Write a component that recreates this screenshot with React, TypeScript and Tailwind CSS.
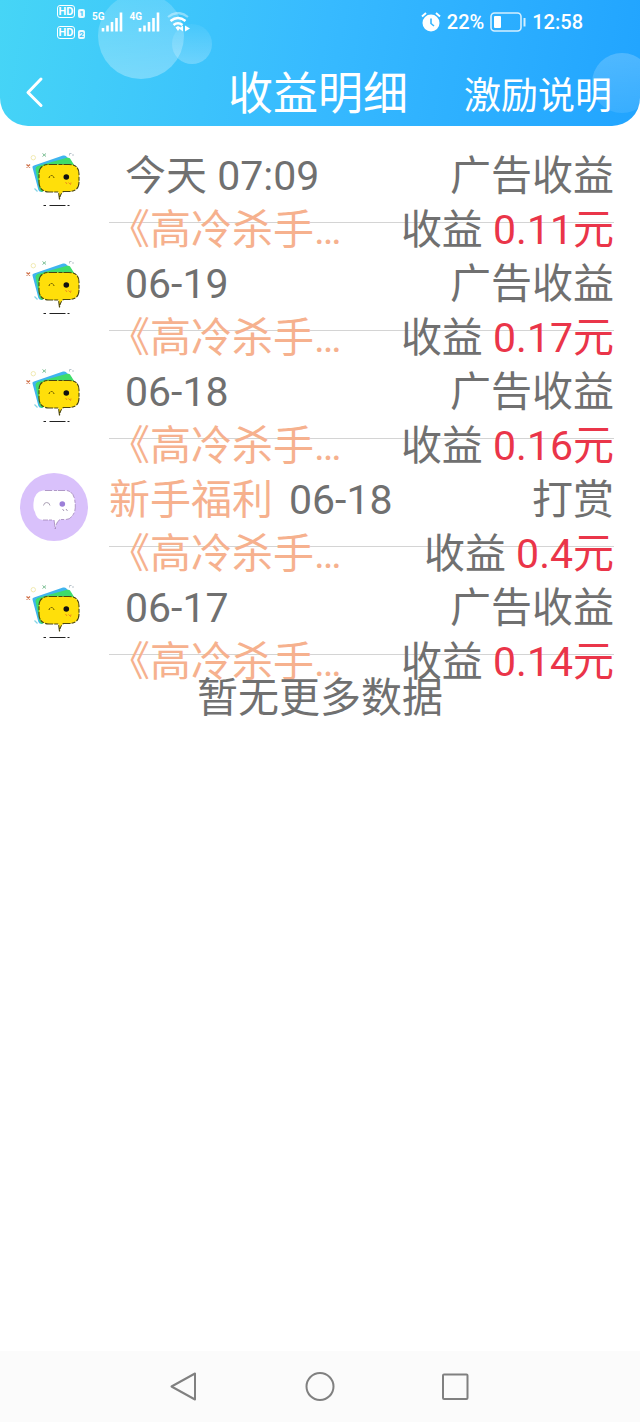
type Income = {
    id: number;
    badge?: string;
    date: string;
    kind: string;
    book: string;
    amount: string;
    reward?: boolean;
}

const incomes: Income[] = [
    { id: 1, date: "今天 07:09", kind: "广告收益", book: "《高冷杀手…", amount: "0.11元" },
    { id: 2, date: "06-19", kind: "广告收益", book: "《高冷杀手…", amount: "0.17元" },
    { id: 3, date: "06-18", kind: "广告收益", book: "《高冷杀手…", amount: "0.16元" },
    { id: 4, badge: "新手福利", date: "06-18", kind: "打赏", book: "《高冷杀手…", amount: "0.4元", reward: true },
    { id: 5, date: "06-17", kind: "广告收益", book: "《高冷杀手…", amount: "0.14元" },
];

function AdAvatar() {
    return (
        <svg viewBox="0 0 68 68" className="size-[68px] shrink-0" fill="none">
            <path d="M12.5 18.5Q12 17 14 16.4L43 6.6Q45 6 46.4 7.4L52 13L22 43Q19 43 18.4 41Z" fill="#3fb4ee" />
            <path d="M15.5 20Q15.5 18 17.5 17L47 8.8Q50 8 51 11L56 19L22 43Q20 42 19.4 40Z" fill="#3fdc6a" />
            <path d="M29 15.5H49Q59 15.5 59 25V33Q59 42.5 49 42.5H43.5Q40 45 39.5 50.5L38.5 43H29Q19 42.5 19 33V25Q19 15.5 29 15.5Z" fill="#ffdf0a" />
            <path d="M29 15.5H49Q59 15.5 59 25V33Q59 42.5 49 42.5H43.5Q40 45 39.5 50.5L38.5 43H29Q19 42.5 19 33V25Q19 15.5 29 15.5Z" stroke="#4a4510" strokeWidth="1.1" strokeDasharray="8 1.5 4 1" />
            <path d="M29 29Q29.5 26.5 31.5 26.5T34 29" stroke="#5c4d00" strokeDasharray="2 1" />
            <circle cx="46.3" cy="28" r="2.8" fill="#111" />
            <path d="M45.5 33L47 35M48.5 33.5L50.5 35.5L51 33.5" stroke="#f08a1c" />
            <path d="M6.5 15.5L10 18.5M10 15.5L6.5 18.5" stroke="#d0714a" strokeWidth="1.3" />
            <circle cx="13.3" cy="8.7" r="2.2" stroke="#f1eab2" />
            <path d="M22.5 4.5L26 7.5M26 4.5L22.5 7.5" stroke="#7cbf94" />
            <path d="M49.5 6.5V4.5H51.5M53 5V7" stroke="#b9c4cc" />
            <path d="M14.5 39.5L17.5 42.5" stroke="#86d4e4" strokeWidth="1.3" />
            <path d="M23.5 56.5H26M29.5 56.5H45.5M47.5 56.5H49.5" stroke="#222" strokeWidth="1.2" />
        </svg>
    );
}

function RewardAvatar() {
    return (
        <svg viewBox="0 0 68 68" className="size-[68px] shrink-0" fill="none">
            <circle cx="34" cy="34" r="34" fill="#d9c1fb" />
            <path d="M23 17.5H46Q54 18 55 29Q56 36 54 40Q51 46.5 46 46.5H40Q36 49 35.3 56L34 47H23Q16 46 15 39Q13 37 13.5 30Q14 19 23 17.5Z" fill="#fff" />
            <path d="M25 17.5H46Q54 18 55 29Q56 36 54 40Q51 46.5 46 46.5H40Q36 49 35.3 56L34 47H23" stroke="#a186b8" strokeWidth="0.8" strokeDasharray="7 2 3 1" />
            <path d="M23.5 32.5Q24 29.5 26.7 29.5T30 32.5" stroke="#aaa0b4" />
            <circle cx="42.3" cy="31" r="2.8" fill="#9c7fd8" />
            <path d="M42.5 36L44 38M46 36L47.5 38" stroke="#a79ab5" />
        </svg>
    );
}

function SimSignal({ net }: { net: string }) {
    return (
        <div className="flex h-5 items-start">
            <span className="text-[10px] leading-[10px] font-bold">{net}</span>
            <svg viewBox="0 0 22 20" className="-ml-1 h-5 w-[22px]" stroke="currentColor" strokeWidth="2.6">
                <path d="M2 19.5V16M6.5 19.5V13.5M11 19.5V10M15.5 19.5V6M20 19.5V.5" />
            </svg>
        </div>
    );
}

function HdTag({ sim }: { sim: number }) {
    return (
        <div className="flex items-end gap-[3px]">
            <span className="flex h-[13px] w-[18px] items-center justify-center rounded-[3px] border border-white text-[11px] leading-none font-bold">HD</span>
            <span className="flex h-[9px] w-[7px] items-center justify-center rounded-[2px] bg-white/90 text-[8px] leading-none font-bold text-[#3cc4f8]">{sim}</span>
        </div>
    );
}

function StatusBar() {
    return (
        <div className="relative flex h-[58px] items-start justify-between px-[57px] text-white">
            <div className="flex gap-[7px]">
                <div className="flex flex-col gap-2 pt-[5px]">
                    <HdTag sim={1} />
                    <HdTag sim={2} />
                </div>
                <div className="flex gap-[7px] pt-3">
                    <SimSignal net="5G" />
                    <SimSignal net="4G" />
                    <svg viewBox="0 0 24 20" className="h-5 w-6" fill="none" stroke="currentColor">
                        <path d="M1 5Q11 -3 21 5" strokeWidth="2.2" opacity=".4" />
                        <path d="M3.5 9Q11 3 18.5 9" strokeWidth="2.6" />
                        <path d="M6.5 13Q11 9.5 15.5 13" strokeWidth="2.6" />
                        <path d="M8.5 15.5L11 14L13.5 15.5L11 19Z" fill="currentColor" stroke="none" />
                        <path d="M12 16.5L16 13.5V19.5ZM23 16.5L18 13.5V19.5Z" fill="currentColor" stroke="none" />
                    </svg>
                </div>
            </div>
            <div className="flex h-11 items-center text-xl font-medium">
                <svg viewBox="0 0 20 20" className="mr-[6px] size-5" fill="none">
                    <circle cx="10" cy="11" r="8.5" fill="currentColor" />
                    <path d="M1 4.5L5 1M19 4.5L15 1" stroke="currentColor" strokeWidth="2" />
                    <path d="M10 6.5V11.5L13 14" stroke="#36b6ff" strokeWidth="1.6" />
                </svg>
                <span>22%</span>
                <svg viewBox="0 0 36 20" className="mx-[6px] h-5 w-9" fill="none">
                    <rect x="1" y="1" width="30" height="18" rx="3.5" stroke="currentColor" strokeWidth="1.6" opacity=".8" />
                    <rect x="4" y="4" width="7" height="12" rx="1" fill="currentColor" />
                    <path d="M34.5 6V14.5" stroke="currentColor" strokeWidth="2" opacity=".8" />
                </svg>
                <span>12:58</span>
            </div>
        </div>
    );
}

function Header() {
    return (
        <header className="relative overflow-hidden rounded-b-[28px] bg-linear-[100deg,#46d5f6,#37baff_50%,#21a4ff]">
            {/* decorative bubbles */}
            <div className="absolute top-[-7px] left-[98px] size-[86px] rounded-full bg-linear-to-b from-white/15 to-white/30" />
            <div className="absolute top-6 left-[172px] size-10 rounded-full bg-linear-to-b from-white/5 to-white/25" />
            <div className="absolute top-[53px] -right-3 size-[60px] rounded-full bg-linear-to-b from-white/20 to-white/10" />
            <StatusBar />
            <div className="relative grid h-[68px] grid-cols-[1fr_auto_1fr] items-center pr-7 pl-6 text-white">
                <button aria-label="返回" className="justify-self-start">
                    <svg viewBox="0 0 20 32" className="h-8 w-5" fill="none" stroke="currentColor" strokeWidth="3" strokeLinecap="round" strokeLinejoin="round">
                        <path d="M17 3L4 16.5L17 29.5" />
                    </svg>
                </button>
                <h1 className="pt-1 text-[45px] leading-none">收益明细</h1>
                <a href="#" className="justify-self-end pt-2 text-[37px] leading-none">激励说明</a>
            </div>
        </header>
    );
}

function IncomeRow({ income }: { income: Income }) {
    return (
        <li className="flex h-[108px] gap-[21px]">
            {income.reward ? <RewardAvatar /> : <AdAvatar />}
            <div className="relative min-w-0 flex-1">
                <div className="absolute top-[73px] h-px w-full bg-[#d4d4d4]" />
                <div className="relative flex h-[54px] items-center justify-between">
                    <div className="flex">
                        {income.badge && <span className="text-[#f6b18e]">{income.badge}</span>}
                        <span className="ml-4">{income.date}</span>
                    </div>
                    <span>{income.kind}</span>
                </div>
                <div className="relative flex h-[54px] items-center justify-between">
                    <span className="text-[#f6b18e]">{income.book}</span>
                    <span>收益 <span className="text-[#ea3549]">{income.amount}</span></span>
                </div>
            </div>
        </li>
    );
}

function SystemNav() {
    return (
        <nav className="flex h-[71px] items-center justify-center gap-[104px] bg-[#fbfbfb] text-[#808080]">
            <button aria-label="后退">
                <svg viewBox="0 0 32 32" className="size-8" fill="none" stroke="currentColor" strokeWidth="2" strokeLinejoin="round">
                    <path d="M3.5 15.5L27 2.5V28.5Z" />
                </svg>
            </button>
            <button aria-label="主页">
                <svg viewBox="0 0 32 32" className="size-8" fill="none" stroke="currentColor" strokeWidth="2">
                    <circle cx="16" cy="15.5" r="13.5" />
                </svg>
            </button>
            <button aria-label="最近任务">
                <svg viewBox="0 0 32 32" className="size-8" fill="none" stroke="currentColor" strokeWidth="2">
                    <rect x="3" y="3.5" width="24.5" height="24.5" rx="1" />
                </svg>
            </button>
        </nav>
    );
}

export default function App() {
    return (
        <div className="flex min-h-screen flex-col bg-white font-['Roboto','Noto_Sans_CJK_SC',sans-serif]" lang="zh-CN">
            <Header />
            <main className="flex-1 pt-[23px] text-[41px] leading-[54px] text-[#707070]">
                <ul className="pr-[26px] pl-5">
                    {incomes.map((income) => (
                        <IncomeRow key={income.id} income={income} />
                    ))}
                </ul>
                <p className="relative -mt-[18px] text-center">暂无更多数据</p>
            </main>
            <SystemNav />
        </div>
    );
}
